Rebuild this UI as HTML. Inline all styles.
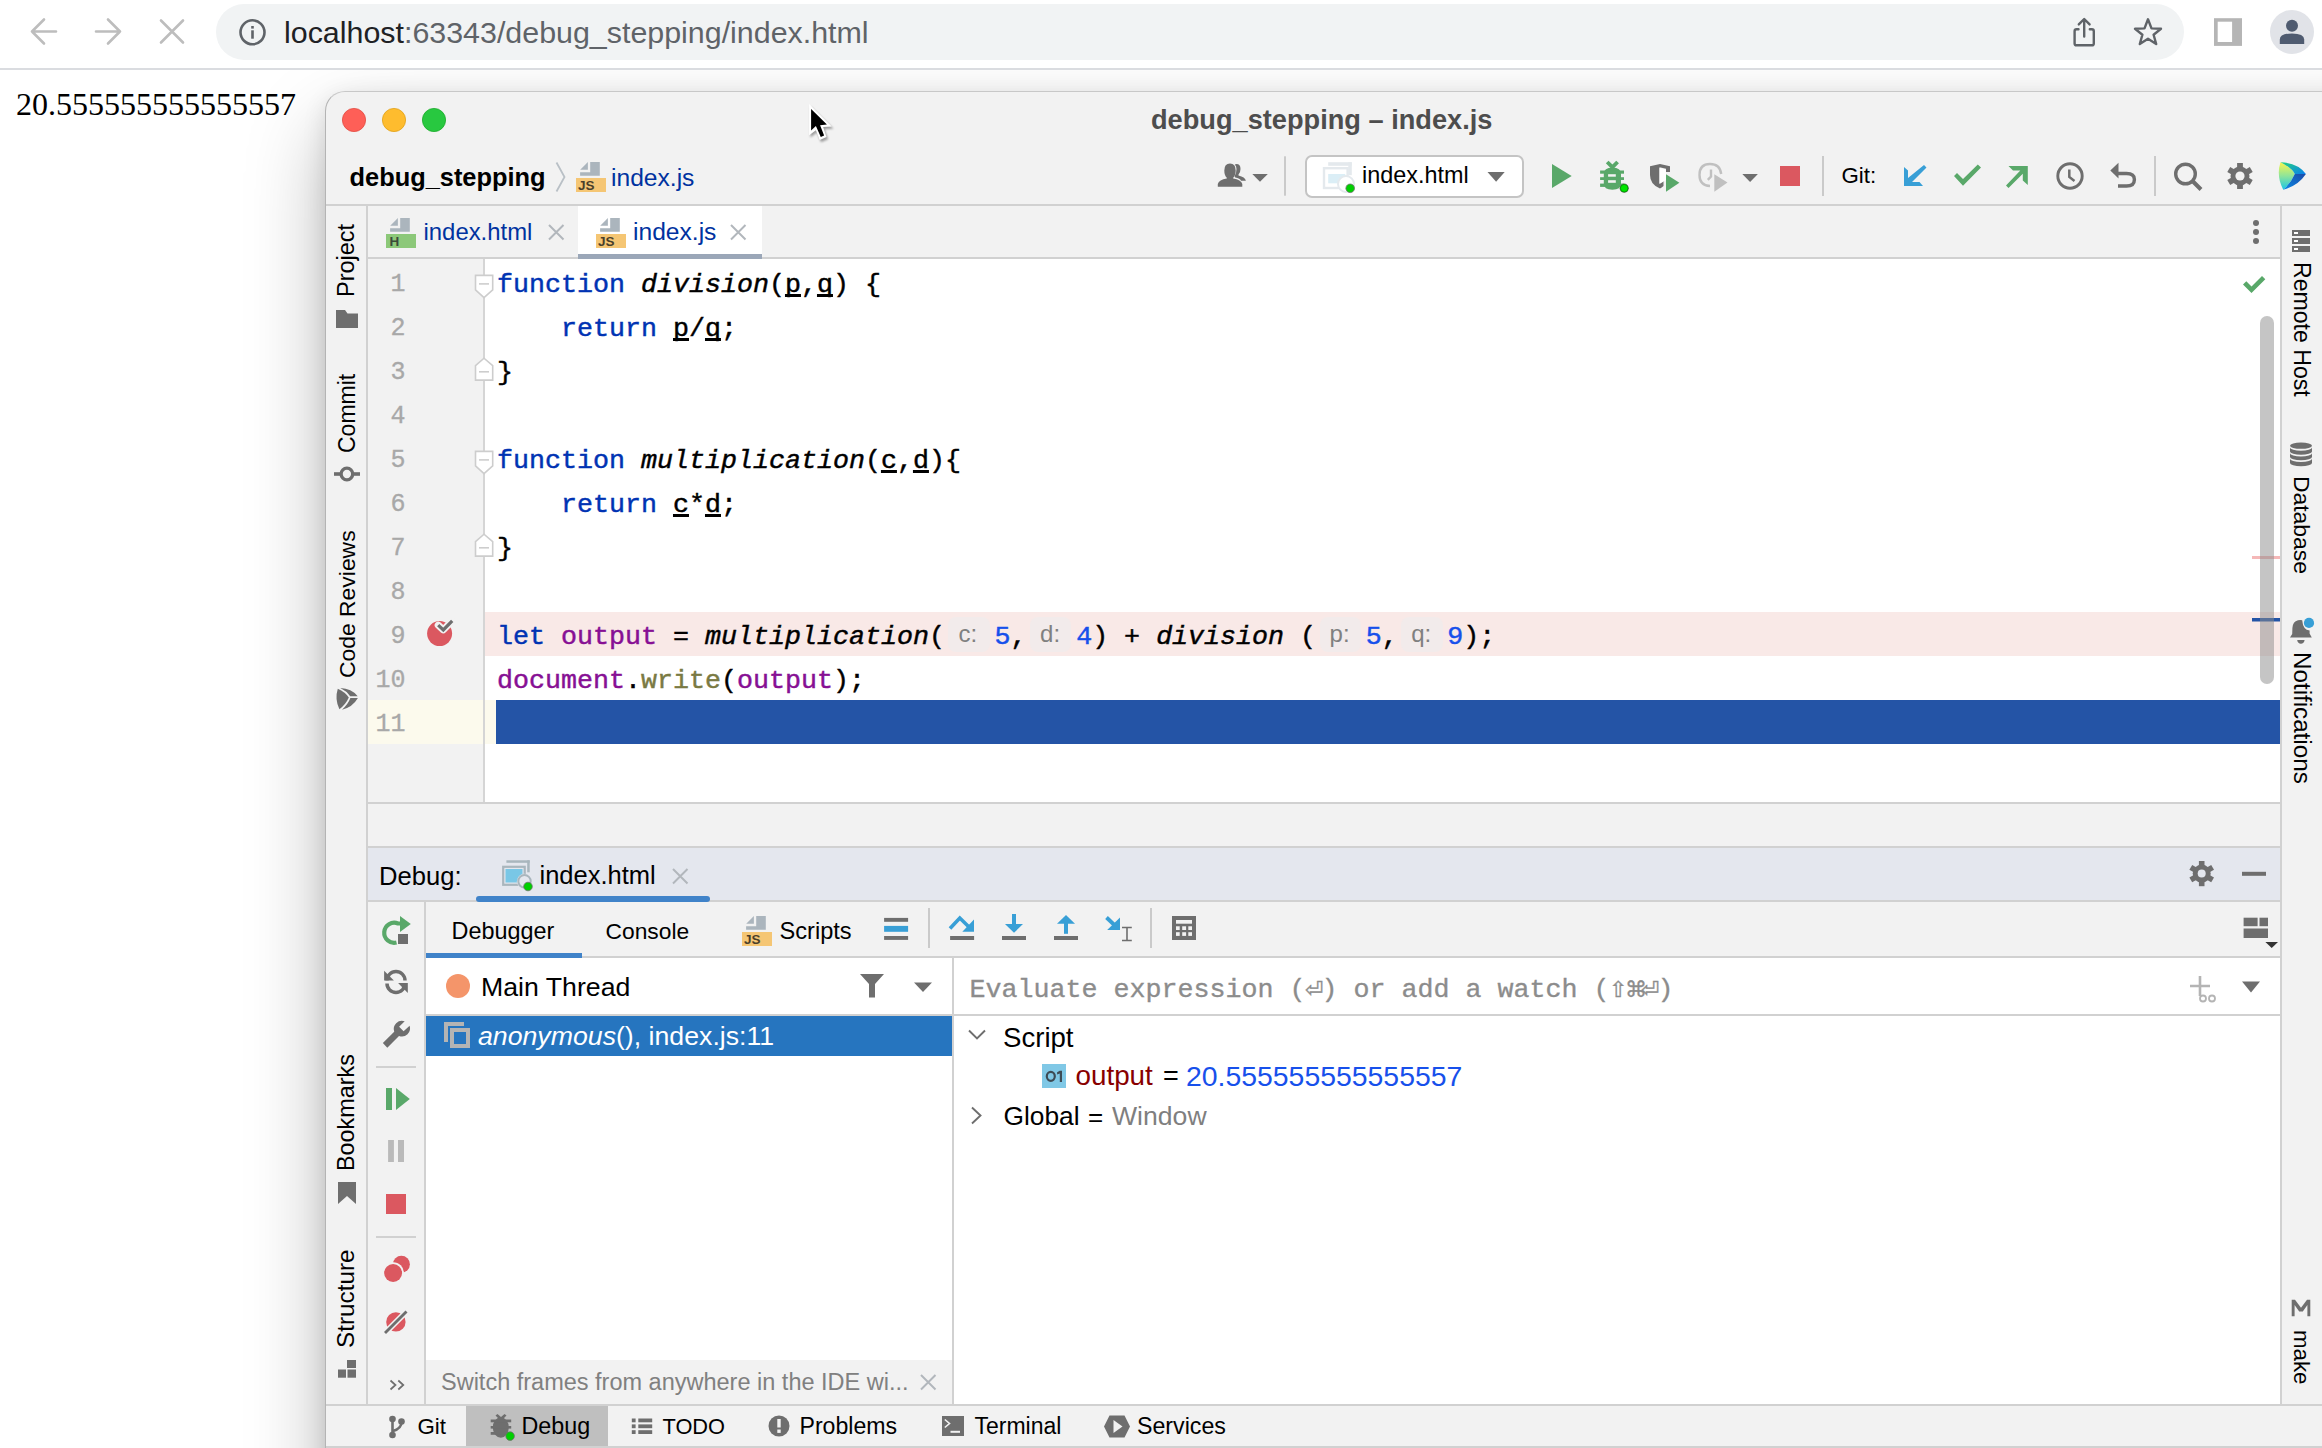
<!DOCTYPE html>
<html><head><meta charset="utf-8">
<style>
*{margin:0;padding:0;box-sizing:border-box}
html,body{width:2322px;height:1448px;overflow:hidden;background:#fff;position:relative;font-family:"Liberation Sans",sans-serif}
.a{position:absolute}
.t{position:absolute;white-space:nowrap;line-height:1}
.m{font-family:"Liberation Mono",monospace}
svg{position:absolute;overflow:visible}
.ln{position:absolute;left:368px;width:37.5px;height:44px;line-height:50px;text-align:right;font-family:"Liberation Mono",monospace;font-size:25px;color:#a8a8a8;white-space:pre;-webkit-text-stroke:0.3px currentColor}
.cl{position:absolute;left:497px;height:44px;line-height:50px;-webkit-text-stroke:0.45px currentColor;font-family:"Liberation Mono",monospace;font-size:26.67px;color:#000;white-space:pre}
.cl i{font-style:italic}
.u{text-decoration:underline;text-decoration-thickness:2.5px;text-underline-offset:1.5px;text-decoration-skip-ink:none}
.h{display:inline-block;width:49.6px;height:44px;vertical-align:top;position:relative}
.h b{-webkit-text-stroke:0;position:absolute;left:3.5px;top:4.5px;width:41.4px;height:35.5px;border-radius:8px;background:#f2ebeb;font-family:"Liberation Sans",sans-serif;font-weight:normal;font-size:24px;line-height:33px;color:#808080;padding-left:10px}
.sym{display:inline-block;width:16px;text-align:center;font-family:"Liberation Sans",sans-serif;font-size:22px}

</style></head><body>
<!-- ===== Browser chrome ===== -->
<div class="a" style="left:0;top:0;width:2322px;height:68px;background:#fff"></div>
<div class="a" style="left:0;top:68px;width:2322px;height:2px;background:#dadce0"></div>
<div class="a" style="left:216px;top:4px;width:1968px;height:56px;border-radius:28px;background:#f1f3f4"></div>
<div id="browsericons"></div>
<div class="t" style="left:284px;top:17px;font-size:30.4px;color:#202124">localhost<span style="color:#5f6368">:63343/debug_stepping/index.html</span></div>
<!-- page text -->
<div class="t" style="left:16px;top:87.5px;font-size:32px;font-family:'Liberation Serif',serif;color:#000">20.555555555555557</div>

<!-- ===== IDE window ===== -->
<div class="a" style="left:0;top:70px;width:2322px;height:1378px;overflow:hidden"><div class="a" style="left:326px;top:22px;width:2100px;height:1500px;border-radius:20px 0 0 0;box-shadow:0 36px 80px 0px rgba(0,0,0,0.28),0 6px 24px rgba(0,0,0,0.12)"></div></div>
<div id="win" class="a" style="left:325px;top:91px;width:1997px;height:1357px;background:#f2f2f2;border-radius:20px 0 0 0;border-left:1.5px solid #b4b4b4;border-top:1.5px solid #c8c8c8;overflow:hidden">
</div>
<div id="ide" class="a" style="left:0;top:0;width:2322px;height:1448px">
  <div class="a" style="left:1304.5px;top:154.5px;width:219px;height:43px;border:2px solid #c4c4c4;border-radius:7px;background:#fff"></div>
  <!-- toolbar bottom border -->
  <div class="a" style="left:326px;top:204px;width:1996px;height:2px;background:#d1d1d1"></div>
  <!-- left stripe border -->
  <div class="a" style="left:366px;top:206px;width:2px;height:1198px;background:#d1d1d1"></div>
  <!-- right stripe border -->
  <div class="a" style="left:2280px;top:206px;width:2px;height:1198px;background:#d1d1d1"></div>
  <!-- tabs bottom border -->
  <div class="a" style="left:368px;top:257px;width:1912px;height:2px;background:#d1d1d1"></div>
  <!-- selected tab -->
  <div class="a" style="left:578px;top:206px;width:184px;height:51px;background:#fff"></div>
  <div class="a" style="left:578px;top:254px;width:184px;height:5px;background:#9ba7b8"></div>
  <!-- editor -->
  <div class="a" style="left:368px;top:259px;width:116px;height:543px;background:#f2f2f2"></div>
  <div class="a" style="left:483px;top:259px;width:2px;height:543px;background:#d5d5d5"></div>
  <div class="a" style="left:485px;top:259px;width:1795px;height:543px;background:#fff"></div>
  <!-- line 9 pink -->
  <div class="a" style="left:485px;top:612px;width:1795px;height:44px;background:#f9e9e7"></div>
  <!-- line 11 caret row + selection -->
  <div class="a" style="left:368px;top:700px;width:115px;height:44px;background:#fcfaed"></div>
  <div class="a" style="left:485px;top:700px;width:11px;height:44px;background:#fcfaed"></div>
  <div class="a" style="left:496px;top:700px;width:1784px;height:44px;background:#2454a6"></div>
  <!-- editor bottom border -->
  <div class="a" style="left:368px;top:802px;width:1912px;height:2px;background:#d1d1d1"></div>
  <!-- debug header -->
  <div class="a" style="left:368px;top:846px;width:1912px;height:2px;background:#d1d1d1"></div>
  <div class="a" style="left:368px;top:848px;width:1912px;height:53px;background:#e4e7ee"></div>
  <div class="a" style="left:368px;top:900px;width:1912px;height:2px;background:#d1d1d1"></div>
  <div class="a" style="left:476px;top:896px;width:234px;height:6px;border-radius:3px;background:#4083c9"></div>
  <!-- debug left column border -->
  <div class="a" style="left:424px;top:902px;width:2px;height:502px;background:#d1d1d1"></div>
  <!-- debugger toolbar bottom border -->
  <div class="a" style="left:426px;top:956px;width:1854px;height:2px;background:#d1d1d1"></div>
  <div class="a" style="left:426px;top:953px;width:156px;height:5px;background:#4083c9"></div>
  <!-- frames & variables panes -->
  <div class="a" style="left:426px;top:958px;width:526px;height:446px;background:#fff"></div>
  <div class="a" style="left:952px;top:958px;width:2px;height:446px;background:#d1d1d1"></div>
  <div class="a" style="left:954px;top:958px;width:1326px;height:446px;background:#fff"></div>
  <div class="a" style="left:426px;top:1014px;width:526px;height:2px;background:#d1d1d1"></div>
  <div class="a" style="left:426px;top:1016px;width:526px;height:40px;background:#2675bf"></div>
  <div class="a" style="left:954px;top:1014px;width:1326px;height:2px;background:#d1d1d1"></div>
  <!-- tip bar -->
  <div class="a" style="left:426px;top:1360px;width:526px;height:44px;background:#f2f2f2"></div>
  <!-- bottom bar -->
  <div class="a" style="left:326px;top:1404px;width:1996px;height:2px;background:#d1d1d1"></div>
  <div class="a" style="left:466px;top:1406px;width:142px;height:40px;background:#bfbfbf"></div>
  <div class="a" style="left:326px;top:1446px;width:1996px;height:2px;background:#d1d1d1"></div>
<!-- TEXT UI -->
<div class="t" style="left:1151.0px;top:105.5px;font-size:27.2px;color:#4d4d4d;font-weight:bold">debug_stepping – index.js</div>
<div class="t" style="left:349.5px;top:165.0px;font-size:25.4px;color:#000;font-weight:bold">debug_stepping</div>
<div class="t" style="left:611.0px;top:165.7px;font-size:24.6px;color:#0032a0;">index.js</div>
<div class="t" style="left:1362.0px;top:164.0px;font-size:23.4px;color:#000;">index.html</div>
<div class="t" style="left:1841.5px;top:165.4px;font-size:22.3px;color:#000;">Git:</div>
<div class="t" style="left:423.5px;top:220.1px;font-size:23.9px;color:#0032a0;">index.html</div>
<div class="t" style="left:633.0px;top:219.5px;font-size:24.6px;color:#0032a0;">index.js</div>
<div class="t" style="left:379.0px;top:863.8px;font-size:25.6px;color:#000;">Debug:</div>
<div class="t" style="left:539.5px;top:862.7px;font-size:25.5px;color:#000;">index.html</div>
<div class="t" style="left:451.5px;top:920.2px;font-size:23.4px;color:#000;">Debugger</div>
<div class="t" style="left:605.5px;top:920.2px;font-size:22.8px;color:#000;">Console</div>
<div class="t" style="left:779.5px;top:919.5px;font-size:23.6px;color:#000;">Scripts</div>
<div class="t" style="left:481.0px;top:973.9px;font-size:26.7px;color:#000;">Main Thread</div>
<div class="t" style="left:478.0px;top:1023.4px;font-size:26.7px;color:#fff;"><i>anonymous</i>(), index.js:11</div>
<div class="t" style="left:1003.0px;top:1024.1px;font-size:27.6px;color:#000;">Script</div>
<div class="t" style="left:1075.5px;top:1062.4px;font-size:27.8px;color:#880000;">output</div>
<div class="t" style="left:1163.0px;top:1063.0px;font-size:27px;color:#000;">=</div>
<div class="t" style="left:1186.0px;top:1061.9px;font-size:28.4px;color:#1750eb;">20.555555555555557</div>
<div class="t" style="left:1003.5px;top:1103.2px;font-size:26.3px;color:#000;">Global</div>
<div class="t" style="left:1088.0px;top:1103.5px;font-size:26px;color:#000;">=</div>
<div class="t" style="left:1112.0px;top:1103.0px;font-size:26.6px;color:#7f7f7f;">Window</div>
<div class="t" style="left:441.0px;top:1371.1px;font-size:23.5px;color:#808080;">Switch frames from anywhere in the IDE wi...</div>
<div class="t" style="left:417.5px;top:1415.5px;font-size:22.3px;color:#000;">Git</div>
<div class="t" style="left:521.5px;top:1414.7px;font-size:23.3px;color:#000;">Debug</div>
<div class="t" style="left:662.5px;top:1415.9px;font-size:21.8px;color:#000;">TODO</div>
<div class="t" style="left:799.5px;top:1414.8px;font-size:23.1px;color:#000;">Problems</div>
<div class="t" style="left:974.5px;top:1414.9px;font-size:23.0px;color:#000;">Terminal</div>
<div class="t" style="left:1137.0px;top:1414.8px;font-size:23.2px;color:#000;">Services</div>
<div class="t" style="left:335.1px;top:297.3px;font-size:23.5px;color:#000;transform-origin:0 0;transform:rotate(-90deg)">Project</div>
<div class="t" style="left:335.5px;top:452.8px;font-size:23.0px;color:#000;transform-origin:0 0;transform:rotate(-90deg)">Commit</div>
<div class="t" style="left:335.6px;top:677.8px;font-size:22.9px;color:#000;transform-origin:0 0;transform:rotate(-90deg)">Code Reviews</div>
<div class="t" style="left:335.2px;top:1171.2px;font-size:23.4px;color:#000;transform-origin:0 0;transform:rotate(-90deg)">Bookmarks</div>
<div class="t" style="left:334.4px;top:1347.8px;font-size:24.3px;color:#000;transform-origin:0 0;transform:rotate(-90deg)">Structure</div>
<div class="t" style="left:2313.1px;top:262.0px;font-size:23.1px;color:#000;transform-origin:0 0;transform:rotate(90deg)">Remote Host</div>
<div class="t" style="left:2312.9px;top:476.0px;font-size:22.9px;color:#000;transform-origin:0 0;transform:rotate(90deg)">Database</div>
<div class="t" style="left:2314.0px;top:652.0px;font-size:24.2px;color:#000;transform-origin:0 0;transform:rotate(90deg)">Notifications</div>
<div class="t" style="left:2312.4px;top:1329.5px;font-size:22.3px;color:#000;transform-origin:0 0;transform:rotate(90deg)">make</div>
<!-- CODE -->
<div class="ln" style="top:260px">1</div>
<div class="cl" style="top:260px"><span style="color:#0033b3">function</span> <i>division</i>(<span class="u">p</span>,<span class="u">q</span>) {</div>
<div class="ln" style="top:304px">2</div>
<div class="cl" style="top:304px">    <span style="color:#0033b3">return</span> <span class="u">p</span>/<span class="u">q</span>;</div>
<div class="ln" style="top:348px">3</div>
<div class="cl" style="top:348px">}</div>
<div class="ln" style="top:392px">4</div>
<div class="ln" style="top:436px">5</div>
<div class="cl" style="top:436px"><span style="color:#0033b3">function</span> <i>multiplication</i>(<span class="u">c</span>,<span class="u">d</span>){</div>
<div class="ln" style="top:480px">6</div>
<div class="cl" style="top:480px">    <span style="color:#0033b3">return</span> <span class="u">c</span>*<span class="u">d</span>;</div>
<div class="ln" style="top:524px">7</div>
<div class="cl" style="top:524px">}</div>
<div class="ln" style="top:568px">8</div>
<div class="ln" style="top:612px">9</div>
<div class="cl" style="top:612px"><span style="color:#0033b3">let</span> <span style="color:#871094">output</span> = <i>multiplication</i>(<span class="h"><b>c:</b></span><span style="color:#1750eb">5</span>,<span class="h"><b>d:</b></span><span style="color:#1750eb">4</span>) + <i>division</i> (<span class="h"><b>p:</b></span><span style="color:#1750eb">5</span>,<span class="h"><b>q:</b></span><span style="color:#1750eb">9</span>);</div>
<div class="ln" style="top:656px">10</div>
<div class="cl" style="top:656px"><span style="color:#871094">document</span>.<span style="color:#7a7a43">write</span>(<span style="color:#871094">output</span>);</div>
<div class="ln" style="top:700px">11</div>
<div class="t m" style="left:969.5px;top:977px;font-size:26.67px;color:#8c8c8c;-webkit-text-stroke:0.35px currentColor">Evaluate expression (<span class="sym">⏎</span>) or add a watch (<span class="sym">⇧</span><span class="sym">⌘</span><span class="sym">⏎</span>)</div>
<!-- ICONS -->
<!-- browser icons -->
<svg style="left:0;top:0" width="2322" height="70" viewBox="0 0 2322 70">
  <g fill="none" stroke="#bdbdbd" stroke-width="2.6" stroke-linecap="round" stroke-linejoin="round">
    <path d="M56 31.5H32M44 19.5L32 31.5L44 43.5"/>
    <path d="M96 31.5H120M108 19.5L120 31.5L108 43.5"/>
    <path d="M161 20.5L183 42.5M183 20.5L161 42.5"/>
  </g>
  <circle cx="252.5" cy="32.3" r="12" fill="none" stroke="#5f6368" stroke-width="2.6"/>
  <rect x="251.2" y="26" width="2.6" height="2.6" fill="#5f6368"/>
  <rect x="251.2" y="30.3" width="2.6" height="8.4" fill="#5f6368"/>
  <g fill="none" stroke="#5f6368" stroke-width="2.4" stroke-linejoin="round" stroke-linecap="round">
    <path d="M2078.5 29.2H2076.5Q2074.6 29.2 2074.6 31.2V43.4Q2074.6 45.3 2076.5 45.3H2091.9Q2093.8 45.3 2093.8 43.4V31.2Q2093.8 29.2 2091.9 29.2H2089.8"/>
    <path d="M2084.2 36.5V19.5M2078.8 24.4L2084.2 19L2089.6 24.4"/>
    <path d="M2148 19.3L2151.5 28.4L2161 28.8L2153.6 34.7L2156.2 44L2148 38.7L2139.8 44L2142.4 34.7L2135 28.8L2144.5 28.4Z"/>
  </g>
  <rect x="2214" y="18.2" width="28" height="27.7" fill="#b5b5b5"/>
  <rect x="2217.7" y="21.7" width="14.4" height="20.3" fill="#fff"/>
  <circle cx="2292" cy="32" r="22" fill="#e1e3e8"/>
  <circle cx="2292" cy="25.7" r="6" fill="#4f5b70"/>
  <path d="M2279.8 44V39.5Q2279.8 33.4 2292 33.4Q2304.2 33.4 2304.2 39.5V44Z" fill="#4f5b70"/>
</svg>
<!-- traffic lights -->
<svg style="left:330;top:96px;left:330px" width="120" height="48" viewBox="330 96 120 48">
  <circle cx="354" cy="120" r="11.6" fill="#fe5f57" stroke="#e24b41" stroke-width="0.8"/>
  <circle cx="394" cy="120" r="11.6" fill="#febc2e" stroke="#e1a116" stroke-width="0.8"/>
  <circle cx="434" cy="120" r="11.6" fill="#28c840" stroke="#1aab29" stroke-width="0.8"/>
</svg>
<!-- mouse cursor -->
<svg style="left:800px;top:100px" width="40" height="48" viewBox="800 100 40 48">
  <defs><filter id="cs" x="-50%" y="-50%" width="200%" height="200%"><feGaussianBlur stdDeviation="1.2"/></filter></defs>
  <path d="M809.6 105.1L809.6 136.3L816.2 131.3L820.2 141L827.3 138L823.6 128.1L832.7 127.5Z" fill="#000" opacity="0.35" filter="url(#cs)" transform="translate(0.8,1.2)"/>
  <path d="M809.1 104.1L809.1 135.3L815.9 130.3L819.7 140L826.5 137L823.1 127.1L831.7 126.5Z" fill="#fff"/>
  <path d="M811.1 108.9L811.1 130.5L815.9 126L820.8 137L824.1 135.5L820.1 125.2L826.9 124.4Z" fill="#000"/>
</svg>
<!-- file icon symbols -->
<svg style="left:0;top:0" width="0" height="0">
  <defs>
    <g id="fpage">
      <path d="M4.2 7.7L11.9 0V7.7Z" fill="#abb5bd"/>
      <path d="M14.2 0H23.8V13.7H4.1V10.2H14.2Z" fill="#abb5bd"/>
    </g>
    <g id="fjs">
      <use href="#fpage"/>
      <rect x="0" y="16" width="30" height="14" fill="#f5c674"/>
      <text x="2" y="28" style="font-family:'Liberation Sans'" font-weight="bold" font-size="13.5" fill="#4b3f2a">JS</text>
    </g>
    <g id="fhtml">
      <use href="#fpage"/>
      <rect x="0" y="16" width="30" height="14" fill="#8cc879"/>
      <text x="3.5" y="28" style="font-family:'Liberation Sans'" font-weight="bold" font-size="13.5" fill="#3b4a38">H</text>
    </g>
    <g id="xmark"><path d="M0 0L14.5 14.5M14.5 0L0 14.5" stroke="#b2b7bc" stroke-width="2" fill="none"/></g>
  </defs>
</svg>
<!-- breadcrumb -->
<svg style="left:550px;top:158px" width="70" height="40" viewBox="550 158 70 40">
  <path d="M556.5 162.5L564.5 177L556.5 191.5" fill="none" stroke="#b9c0c6" stroke-width="1.8"/>
  <use href="#fjs" x="576" y="162"/>
</svg>
<!-- tab icons -->
<svg style="left:380px;top:210px" width="400" height="45" viewBox="380 210 400 45">
  <use href="#fhtml" x="386" y="218"/>
  <use href="#xmark" x="549" y="225"/>
  <use href="#fjs" x="596" y="218"/>
  <use href="#xmark" x="731" y="225"/>
</svg>

<!-- main toolbar -->
<svg style="left:1200px;top:150px" width="1122" height="52" viewBox="1200 150 1122 52">
  <!-- users -->
  <g fill="#6e6e6e">
    <path d="M1236.5 164Q1240.5 164 1240.5 169Q1240.5 172.5 1238.5 174.5V175.5Q1245 177 1245.9 180.7H1241Q1240 178.5 1235.3 177.6L1234.5 176.2Q1236.5 173.5 1236.5 169Q1236.5 166 1234.8 164.4Q1235.5 164 1236.5 164Z"/>
    <path d="M1230 163.5Q1235.7 163.5 1235.7 170.5Q1235.7 175.5 1233.2 177.7V178.6Q1241 180 1242.3 184V186.8H1217.8V184Q1219 180 1226.8 178.6V177.7Q1224.3 175.5 1224.3 170.5Q1224.3 163.5 1230 163.5Z"/>
    <path d="M1252.3 174H1267.8L1260 181.8Z"/>
  </g>
  <rect x="1284" y="156.3" width="2" height="39.4" fill="#cacaca"/>
  <!-- web icon in combo (faded) -->
  <g>
    <rect x="1328.2" y="162.2" width="23.6" height="3.6" fill="#e4e9ed"/>
    <rect x="1348.3" y="162.2" width="3.5" height="13" fill="#e4e9ed"/>
    <rect x="1324" y="168.2" width="23.6" height="19.8" fill="none" stroke="#e4e9ed" stroke-width="2.4"/>
    <rect x="1328.2" y="174" width="17" height="9.3" fill="#dbeef6"/>
    <circle cx="1346" cy="184" r="8" fill="#fff" stroke="#e4e9ed" stroke-width="2"/>
    <circle cx="1350.2" cy="188.3" r="4.3" fill="#00d000" stroke="#6e6e6e" stroke-width="0.8"/>
  </g>
  <path d="M1487.5 172H1504.7L1496.1 181.8Z" fill="#6e6e6e"/>
  <!-- play -->
  <path d="M1552 164L1571.7 176L1552 188Z" fill="#59a869"/>
  <!-- bug -->
  <g fill="#59a869">
    <path d="M1603.8 184V174Q1603.8 167.5 1612.4 167.5Q1621 167.5 1621 174V184Q1621 189.7 1612.4 189.7Q1603.8 189.7 1603.8 184Z"/>
    <rect x="1600.1" y="170.5" width="23.9" height="3.2"/>
    <rect x="1600.1" y="177.2" width="23.9" height="2.8"/>
    <rect x="1600.1" y="183.6" width="23.9" height="3.3"/>
  </g>
  <path d="M1607.2 162L1612.4 167.2L1617.6 162" fill="none" stroke="#59a869" stroke-width="3.8"/>
  <rect x="1608.1" y="174.2" width="7.7" height="2.5" fill="#f2f2f2"/>
  <rect x="1608.1" y="180.2" width="7.7" height="2.6" fill="#f2f2f2"/>
  <circle cx="1624.2" cy="188.2" r="4.6" fill="#7a7a7a"/>
  <circle cx="1624.2" cy="188.2" r="3.8" fill="#00e600" stroke="#009900" stroke-width="0.9"/>
  <!-- coverage -->
  <path d="M1650 166.3L1660 164L1670 166.3V172H1666V168.7L1659.5 167.2V183.5L1663.5 180.8V186Q1661.5 187.8 1660 188.5Q1650 184.5 1650 175Z" fill="#6e6e6e"/>
  <path d="M1659.5 168L1666 169.5V180L1659.5 184Z" fill="#fff"/>
  <path d="M1666 174.2L1679.4 182.8L1666 191.8Z" fill="#59a869"/>
  <!-- profiler (disabled) -->
  <g fill="none" stroke="#c0c0c0" stroke-width="2.4">
    <path d="M1721.2 174Q1720 164 1710 164Q1699.5 164 1699.5 175Q1699.5 185.5 1710 186"/>
    <path d="M1711 169.5V176.5L1707.8 179.8"/>
  </g>
  <path d="M1714.3 174.2L1727.5 182.5L1714.3 191.8Z" fill="#c0c0c0"/>
  <path d="M1742.3 174H1757.9L1750.1 182Z" fill="#6e6e6e"/>
  <rect x="1780" y="166" width="20" height="20" fill="#db5860"/>
  <rect x="1822" y="156" width="2" height="40" fill="#cacaca"/>
  <!-- git arrows -->
  <path d="M1924 165L1926.5 167.5L1912 182H1919.5L1923 186H1904V167L1908 170.5V178Z" fill="#389fd6"/>
  <path d="M1954 176L1957 173L1963 179L1977.8 164.5L1981 167.5L1963 185.8Z" fill="#59a869"/>
  <path d="M2006 185.5L2008.5 188L2022.8 173.8V180.5L2027.8 185V166H2008.5L2013 170.5H2020.3Z" fill="#59a869"/>
  <!-- clock -->
  <circle cx="2070" cy="176" r="12.2" fill="none" stroke="#6e6e6e" stroke-width="2.9"/>
  <path d="M2069.3 169.5V177L2074.5 181" fill="none" stroke="#6e6e6e" stroke-width="2.5"/>
  <!-- undo -->
  <path d="M2118 173.5H2126.5Q2134.4 173.5 2134.4 179.4Q2134.4 186 2126.5 186H2118" fill="none" stroke="#6e6e6e" stroke-width="3.4"/>
  <path d="M2110.3 170.5L2118.5 162.7V178.5Z" fill="#6e6e6e"/>
  <rect x="2154" y="156" width="2" height="40" fill="#cacaca"/>
  <!-- search -->
  <circle cx="2185.5" cy="174" r="9.8" fill="none" stroke="#6e6e6e" stroke-width="3.4"/>
  <path d="M2192.5 181L2201 189.5" stroke="#6e6e6e" stroke-width="4" fill="none"/>
  <!-- gear -->
  <g transform="translate(2240 176)" fill="#6e6e6e">
    <circle r="9.5" />
    <rect x="-2.9" y="-13" width="5.8" height="26"/>
    <rect x="-2.9" y="-13" width="5.8" height="26" transform="rotate(60)"/>
    <rect x="-2.9" y="-13" width="5.8" height="26" transform="rotate(120)"/>
    <circle r="4.6" fill="#f2f2f2"/>
  </g>
  <!-- logo -->
  <defs>
    <linearGradient id="lg1" x1="0" y1="0" x2="0" y2="1"><stop offset="0" stop-color="#f9f74a"/><stop offset="0.5" stop-color="#8ee49a"/><stop offset="1" stop-color="#18c6e6"/></linearGradient>
    <linearGradient id="lg2" x1="0" y1="0" x2="1" y2="1"><stop offset="0" stop-color="#22d47c"/><stop offset="1" stop-color="#0a80f0"/></linearGradient>
    <linearGradient id="lg3" x1="1" y1="0" x2="0" y2="1"><stop offset="0" stop-color="#1c4aa8"/><stop offset="1" stop-color="#0a8ae6"/></linearGradient>
  </defs>
  <path d="M2280.5 162.2Q2292 168 2294.8 174Q2291 183 2283.2 189.7Q2276 176 2280.5 162.2Z" fill="url(#lg1)"/>
  <path d="M2280.5 162.2Q2298 163 2305.9 174H2294.8Q2292 168 2280.5 162.2Z" fill="url(#lg2)"/>
  <path d="M2305.9 174Q2298 186 2283.2 189.7Q2291 183 2294.8 174Z" fill="url(#lg3)"/>
</svg>

<!-- editor gutter & decorations -->
<svg style="left:326px;top:206px" width="1996" height="600" viewBox="326 206 1996 600">
  <defs>
    <g id="foldS"><path d="M-8.5 -7.6H8.7V6.8L0 14.7L-8.5 6.8Z" fill="#fff" stroke="#cdcdcd" stroke-width="1.6"/><path d="M-5 0.9H5" stroke="#cdcdcd" stroke-width="1.6"/></g>
    <g id="foldE"><path d="M-8.5 9.1H8.7V-5.4L0 -12.8L-8.5 -5.4Z" fill="#fff" stroke="#cdcdcd" stroke-width="1.6"/><path d="M-5 0.8H5" stroke="#cdcdcd" stroke-width="1.6"/></g>
  </defs>
  <use href="#foldS" x="484" y="283"/>
  <use href="#foldE" x="484" y="371"/>
  <use href="#foldS" x="484" y="459"/>
  <use href="#foldE" x="484" y="547"/>
  <!-- breakpoint -->
  <circle cx="439.6" cy="633.6" r="12.5" fill="#db5860"/>
  <path d="M438.2 625.1L443.3 629.9L452.2 620.8" fill="none" stroke="#f2f2f2" stroke-width="7" stroke-linecap="round" stroke-linejoin="round"/>
  <path d="M438.2 625.1L443.3 629.9L452.2 620.8" fill="none" stroke="#6e6e6e" stroke-width="3.2" stroke-linejoin="miter"/>
  <!-- three dots -->
  <circle cx="2256" cy="223" r="3" fill="#6e6e6e"/>
  <circle cx="2256" cy="232" r="3" fill="#6e6e6e"/>
  <circle cx="2256" cy="241" r="3" fill="#6e6e6e"/>
  <!-- green check -->
  <path d="M2243 284.5L2246.3 281.3L2251.5 286.5L2262 276L2265.3 279.2L2251.5 293Z" fill="#59a869"/>
  <!-- marks -->
  <rect x="2252" y="556" width="28" height="3" fill="#f5b8b8"/>
  <rect x="2252" y="618" width="28" height="3.5" fill="#2454a6"/>
  <!-- scrollbar -->
  <rect x="2260" y="316" width="14" height="368" rx="7" fill="#8c8c8c" opacity="0.5"/>
  <!-- right stripe icons -->
  <g fill="#6e6e6e">
    <rect x="2292" y="230" width="18" height="6"/>
    <rect x="2292" y="238" width="18" height="6"/>
    <rect x="2292" y="246" width="18" height="6"/>
  </g>
  <g fill="#fff"><rect x="2294" y="232" width="4" height="2"/><rect x="2294" y="240" width="4" height="2"/><rect x="2294" y="248" width="4" height="2"/></g>
  <!-- database -->
  <g fill="#6e6e6e">
    <ellipse cx="2301" cy="445.7" rx="11" ry="3.1"/>
    <path d="M2290 447.5A11 3.2 0 0 0 2312 447.5V451.5A11 3.2 0 0 1 2290 451.5Z"/>
    <path d="M2290 453.2A11 3.2 0 0 0 2312 453.2V457.1A11 3.2 0 0 1 2290 457.1Z"/>
    <path d="M2290 458.7A11 3.2 0 0 0 2312 458.7V463A11 3.2 0 0 1 2290 463Z"/>
  </g>
  <!-- bell -->
  <path d="M2290 637.6H2311.8L2309.6 633.6V630.4Q2303 630 2302.2 620.2Q2300 619.9 2298 620.3Q2292.8 621.5 2292.4 628L2292.2 633.9Z" fill="#6e6e6e"/>
  <path d="M2297.2 640H2304.6Q2304 643.8 2300.9 643.8Q2297.8 643.8 2297.2 640Z" fill="#6e6e6e"/>
  <circle cx="2309" cy="622.9" r="5.1" fill="#389fd6"/>
  <!-- left stripe icons -->
  <path d="M336 310H345L347.5 313.5H358V328H336Z" fill="#6e6e6e"/>
  <rect x="334" y="472.2" width="26" height="3.6" fill="#6e6e6e"/>
  <circle cx="346.9" cy="474" r="5.8" fill="#f2f2f2" stroke="#6e6e6e" stroke-width="3.3"/>
  <!-- code reviews -->
  <g fill="#6e6e6e">
    <path d="M337.8 688.8Q345 692 348.8 697.5Q346 704 339.4 709.3Q334.5 699 337.8 688.8Z"/>
    <path d="M340.3 688.1Q351.5 688.5 357.7 696.3H350.2Q346.5 691 340.3 688.1Z"/>
    <path d="M350.4 698.1H357.9Q352.5 707.5 342 709.7Q348 704.5 350.4 698.1Z"/>
  </g>
</svg>
<!-- bottom-left stripe icons -->
<svg style="left:326px;top:1170px" width="50" height="220" viewBox="326 1170 50 220">
  <path d="M338 1182H356V1204L347 1196L338 1204Z" fill="#6e6e6e"/>
  <rect x="347" y="1360" width="9" height="8" fill="#6e6e6e"/>
  <rect x="338" y="1369.5" width="8" height="8.2" fill="#6e6e6e"/>
  <rect x="347.5" y="1369.5" width="8.5" height="8.2" fill="#6e6e6e"/>
</svg>
<!-- right stripe M -->
<svg style="left:2285px;top:1295px" width="30" height="25" viewBox="2285 1295 30 25">
  <path d="M2291.7 1299.7V1316.3H2294.6V1305L2299.2 1311.5H2302.8L2307.4 1305V1316.3H2310.3V1299.7H2307L2301 1307.8L2295 1299.7Z" fill="#6e6e6e"/>
</svg>

<!-- debug panel icons -->
<svg style="left:366px;top:846px" width="1956" height="560" viewBox="366 846 1956 560">
  <!-- debug tab web icon -->
  <rect x="506.4" y="860.3" width="23.3" height="2.5" fill="#a9b6bd"/>
  <rect x="527.2" y="860.3" width="2.5" height="12" fill="#a9b6bd"/>
  <rect x="503.2" y="866.8" width="21.5" height="18" fill="none" stroke="#a9b6bd" stroke-width="2.2"/>
  <rect x="505.5" y="869" width="17" height="13.5" fill="#79c7e6"/>
  <circle cx="524.5" cy="881.3" r="7.6" fill="#e4e7ee"/>
  <circle cx="524.5" cy="881.3" r="6.2" fill="none" stroke="#a9b6bd" stroke-width="2"/>
  <circle cx="528" cy="886.5" r="4.3" fill="#00d000" stroke="#6e6e6e" stroke-width="0.8"/>
  <use href="#xmark" x="673" y="869"/>
  <!-- header gear & minimize -->
  <g transform="translate(2201.7 873.6)" fill="#6e6e6e">
    <circle r="9"/>
    <rect x="-2.8" y="-12.6" width="5.6" height="25.2"/>
    <rect x="-2.8" y="-12.6" width="5.6" height="25.2" transform="rotate(60)"/>
    <rect x="-2.8" y="-12.6" width="5.6" height="25.2" transform="rotate(120)"/>
    <circle r="4" fill="#e4e7ee"/>
  </g>
  <rect x="2242" y="871.8" width="24" height="4" fill="#6e6e6e"/>
  <!-- left debug column -->
  <path d="M396.5 942.5A10 10 0 1 1 398 923.5H401" fill="none" stroke="#59a869" stroke-width="4.2"/>
  <path d="M400 916L410.8 924L400 932Z" fill="#59a869"/>
  <rect x="398" y="934" width="10" height="10" fill="#6e6e6e"/>
  <!-- sync -->
  <g fill="none" stroke="#6e6e6e" stroke-width="3.5">
    <path d="M387 980.5A9 9 0 0 1 405 980.5"/>
    <path d="M405 983.5A9 9 0 0 1 387 983.5"/>
  </g>
  <path d="M384.1 970.7V980.5H393.9Z" fill="#6e6e6e"/>
  <path d="M398.1 983.1H407.8V993.1Z" fill="#6e6e6e"/>
  <!-- wrench -->
  <path d="M382.85 1043.1L394.2 1031.7A8.2 8.2 0 0 1 404.7 1021.3L399.1 1026.7L403.6 1031.2L409.6 1025.7A8.2 8.2 0 0 1 399 1036L387.3 1047.7Z" fill="#6e6e6e"/>
  <rect x="376" y="1066" width="40" height="2" fill="#d1d1d1"/>
  <!-- resume/pause/stop -->
  <rect x="386" y="1088" width="6" height="22" fill="#59a869"/>
  <path d="M396 1088L409.8 1098.9L396 1110Z" fill="#59a869"/>
  <rect x="388.1" y="1140" width="5.8" height="22" fill="#bababa"/>
  <rect x="398" y="1140" width="6" height="22" fill="#bababa"/>
  <rect x="386" y="1194" width="20" height="20" fill="#db5860"/>
  <rect x="376" y="1236" width="40" height="2" fill="#d1d1d1"/>
  <!-- breakpoints -->
  <circle cx="401.4" cy="1264.2" r="8.5" fill="#db5860"/>
  <circle cx="393.1" cy="1273" r="10.8" fill="#f2f2f2"/>
  <circle cx="393.1" cy="1273" r="9" fill="#db5860"/>
  <circle cx="395.9" cy="1321.9" r="9.7" fill="#db5860"/>
  <path d="M385 1333L406.5 1311.5" stroke="#f2f2f2" stroke-width="6"/>
  <path d="M385 1333L406.5 1311.5" stroke="#6e6e6e" stroke-width="2.8"/>
  <path d="M390.5 1380.5L395.5 1385L390.5 1389.5M398.3 1380.5L403.3 1385L398.3 1389.5" fill="none" stroke="#6e6e6e" stroke-width="1.7"/>
  <!-- debugger toolbar -->
  <use href="#fjs" x="742" y="916"/>
  <rect x="884.1" y="917.9" width="24" height="3.9" fill="#6e6e6e"/>
  <rect x="884.1" y="925.9" width="24" height="5.9" fill="#389fd6"/>
  <rect x="884.1" y="936" width="24" height="3.9" fill="#6e6e6e"/>
  <rect x="928" y="908" width="2" height="40" fill="#cacaca"/>
  <!-- step over -->
  <path d="M950 928.5L959.8 918L969 927" fill="none" stroke="#389fd6" stroke-width="3.6"/>
  <path d="M962.3 931.8L974 919.6V931.8Z" fill="#389fd6"/>
  <rect x="950.1" y="936" width="24" height="4" fill="#6e6e6e"/>
  <!-- step into -->
  <rect x="1012" y="914" width="4" height="11" fill="#389fd6"/>
  <path d="M1005 924H1023L1014 932.8Z" fill="#389fd6"/>
  <rect x="1002" y="936" width="24" height="4" fill="#6e6e6e"/>
  <!-- step out -->
  <path d="M1057 923.7H1075L1066 915Z" fill="#389fd6"/>
  <rect x="1064" y="923" width="4" height="10.8" fill="#389fd6"/>
  <rect x="1054" y="936" width="24" height="4" fill="#6e6e6e"/>
  <!-- run to cursor -->
  <path d="M1106.5 917.5L1116 926.5" stroke="#389fd6" stroke-width="3.8"/>
  <path d="M1107.2 929.9L1120 917.4V929.9Z" fill="#389fd6"/>
  <path d="M1127 927.5V940.5M1122 927.5H1131.8M1122 940.5H1131.8" fill="none" stroke="#6e6e6e" stroke-width="1.6"/>
  <rect x="1150" y="908" width="2" height="40" fill="#cacaca"/>
  <!-- calculator -->
  <rect x="1172" y="916" width="24" height="24" fill="#6e6e6e"/>
  <g fill="#f2f2f2">
    <rect x="1176" y="920" width="16" height="3.7"/>
    <rect x="1176" y="926.3" width="3.7" height="3.7"/><rect x="1182.2" y="926.3" width="3.9" height="3.7"/><rect x="1188.3" y="926.3" width="3.7" height="3.7"/>
    <rect x="1176" y="932.2" width="3.7" height="3.7"/><rect x="1182.2" y="932.2" width="3.9" height="3.7"/><rect x="1188.3" y="932.2" width="3.7" height="3.7"/>
  </g>
  <!-- layout icon -->
  <g fill="#6e6e6e">
    <rect x="2243.6" y="917.7" width="14" height="8.5"/>
    <rect x="2259.5" y="917.7" width="8.5" height="8.5"/>
    <rect x="2243.6" y="928.5" width="24.4" height="9.5"/>
    <path d="M2265.4 942H2278L2271.7 948Z" fill="#333"/>
  </g>
  <!-- frames pane -->
  <circle cx="458" cy="986" r="12" fill="#f4956a"/>
  <path d="M860 974H884L875 984V997.6H869V984Z" fill="#6e6e6e"/>
  <path d="M914 982.5H932L923 992Z" fill="#6e6e6e"/>
  <path d="M444 1022.1H464V1025.9H448V1041.9H444Z" fill="#b4b4b4"/><path d="M450 1028.1H470V1048H450ZM454 1031.9V1044H466V1031.9Z" fill="#b4b4b4" fill-rule="evenodd"/>
  <!-- variables -->
  <path d="M969 1030.5L977 1038.5L985 1030.5" fill="none" stroke="#6e6e6e" stroke-width="1.9"/>
  <rect x="1042" y="1064" width="24" height="24" fill="#80c8e6"/>
<ellipse cx="1050.8" cy="1076.3" rx="4" ry="4.5" fill="none" stroke="#3d4b55" stroke-width="2.2"/><path d="M1059.8 1070.7H1062V1081.9H1059.8V1073.4L1057.1 1074.4V1072.3Z" fill="#3d4b55"/>
  <path d="M972 1107.5L980.5 1115.5L972 1123.5" fill="none" stroke="#6e6e6e" stroke-width="1.9"/>
  <!-- add watch -->
  <path d="M2200 976V996M2190 986H2210" stroke="#b4b4b4" stroke-width="2.6"/>
  <circle cx="2203" cy="998.5" r="3" fill="#fff" stroke="#b4b4b4" stroke-width="1.8"/>
  <circle cx="2212" cy="998.5" r="3" fill="#fff" stroke="#b4b4b4" stroke-width="1.8"/>
  <path d="M2242 981.5H2260L2251 992.4Z" fill="#6e6e6e"/>
  <!-- tip close -->
  <use href="#xmark" x="921" y="1375"/>
</svg>
<!-- bottom bar icons -->
<svg style="left:326px;top:1406px" width="1000" height="40" viewBox="326 1406 1000 40">
  <g fill="#6e6e6e">
    <circle cx="392.5" cy="1419" r="3.3"/>
    <circle cx="392.5" cy="1435" r="3.3"/>
    <circle cx="401.5" cy="1421.5" r="3.3"/>
    <rect x="391.2" y="1419" width="2.6" height="16"/>
  </g>
  <path d="M401.5 1422Q401.5 1428.5 393 1431" fill="none" stroke="#6e6e6e" stroke-width="2.6"/>
  <!-- bug -->
  <g fill="#6e6e6e">
    <ellipse cx="500.8" cy="1427.5" rx="8" ry="10.2"/>
    <rect x="490.7" y="1419.5" width="20.5" height="2.8"/>
    <rect x="490.7" y="1426" width="20.5" height="2.6"/>
    <rect x="490.7" y="1432" width="20.5" height="2.8"/>
    <path d="M495.5 1415.5L497.5 1414L501 1417L504.5 1414L506.5 1415.5L503 1419L501 1420L499 1419Z"/>
  </g>
  <circle cx="510.1" cy="1436.1" r="4.3" fill="#00d000" stroke="#6e6e6e" stroke-width="0.8"/>
  <!-- todo -->
  <g fill="#6e6e6e">
    <rect x="631.8" y="1418.5" width="3.8" height="3.8"/><rect x="638.3" y="1418.5" width="13.9" height="3.8"/>
    <rect x="631.8" y="1424.4" width="3.8" height="3.8"/><rect x="638.3" y="1424.4" width="13.9" height="3.8"/>
    <rect x="631.8" y="1430.2" width="3.8" height="3.8"/><rect x="638.3" y="1430.2" width="13.9" height="3.8"/>
  </g>
  <!-- problems -->
  <circle cx="779" cy="1426" r="10.5" fill="#6e6e6e"/>
  <rect x="777.3" y="1419" width="3.4" height="8.5" fill="#f2f2f2"/>
  <rect x="777.3" y="1429.5" width="3.4" height="3.4" fill="#f2f2f2"/>
  <!-- terminal -->
  <rect x="942" y="1416" width="22" height="20" fill="#6e6e6e"/>
  <path d="M944.8 1419.5L949.5 1423.5L944.8 1427.5" fill="none" stroke="#f2f2f2" stroke-width="1.6"/>
  <rect x="950.5" y="1430.8" width="9.5" height="2" fill="#f2f2f2"/>
  <!-- services -->
  <path d="M1109.5 1415.5H1124.5L1130 1426.5L1124.5 1437.5H1109.5L1104 1426.5Z" fill="#6e6e6e"/>
  <path d="M1113.5 1420L1122.5 1426.5L1113.5 1433Z" fill="#f2f2f2"/>
</svg>


</div>
</body></html>
